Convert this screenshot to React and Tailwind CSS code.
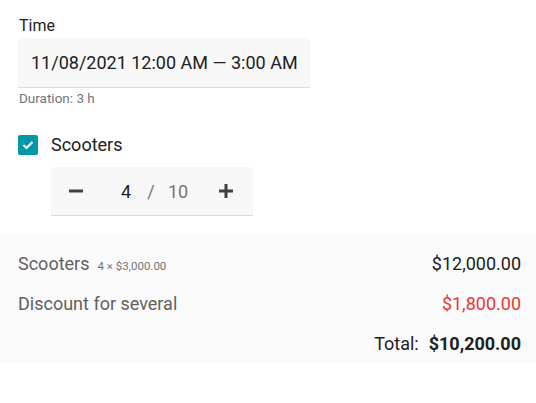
import React, { useState } from "react";

const MinusIcon = () => (
  <svg width="14" height="14" viewBox="0 0 14 14">
    <rect x="0" y="5.5" width="14" height="3" fill="#404040" />
  </svg>
);

const PlusIcon = () => (
  <svg width="14" height="14" viewBox="0 0 14 14">
    <rect x="0" y="5.5" width="14" height="3" fill="#404040" />
    <rect x="5.5" y="0" width="3" height="14" fill="#404040" />
  </svg>
);

const App = () => {
  const [count, setCount] = useState(4);
  const [checked, setChecked] = useState(true);

  return (
    <div className="w-[536px] h-[403px] bg-white font-['Roboto',sans-serif] text-[#212121]">
      <div className="px-[18px] pt-[15px]">
        <div className="text-[16px] leading-[21px] pl-[1px]">Time</div>
        <div className="mt-[2px] w-[292px] h-[50px] rounded-t-[4px] bg-[#f7f7f7] border-b border-[#dcdcdc] flex items-center pl-[13px] text-[18px] whitespace-nowrap">
          11/08/2021 12:00 AM — 3:00 AM
        </div>
        <div className="pl-[1px] pt-[1px] text-[13.5px] leading-[18px] text-[#757575]">Duration: 3 h</div>

        <label className="mt-[28px] flex items-center gap-[13px] cursor-pointer">
          <span
            onClick={() => setChecked(!checked)}
            className={`w-[20px] h-[20px] rounded-[2px] flex items-center justify-center ${checked ? "bg-[#0097a7]" : "border-2 border-[#757575]"}`}
          >
            {checked && (
              <svg width="12" height="10" viewBox="0 0 12 10">
                <path d="M1.5 5 L4.5 8 L10.5 2" stroke="white" strokeWidth="2.2" fill="none" />
              </svg>
            )}
          </span>
          <span className="text-[18px] leading-[20px]">Scooters</span>
        </label>

        <div className="mt-[12px] ml-[33px] w-[202px] h-[49px] pr-[2px] rounded-t-[4px] bg-[#f7f7f7] border-b border-[#dcdcdc] flex items-center">
          <button onClick={() => setCount(Math.max(0, count - 1))} className="w-[50px] flex justify-center">
            <MinusIcon />
          </button>
          <div className="flex-1 flex items-center pl-[15px] text-[18px]">
            <span className="w-[20px] text-center text-[#212121]">{count}</span>
            <span className="ml-[5px] w-[20px] text-center text-[#757575]">/</span>
            <span className="ml-[7px] w-[20px] text-center text-[#757575]">10</span>
          </div>
          <button onClick={() => setCount(Math.min(10, count + 1))} className="w-[50px] flex justify-center">
            <PlusIcon />
          </button>
        </div>
      </div>

      <div className="mt-[18px] bg-[#fafafa] pl-[18px] pr-[15px] pt-[9px]">
        <div className="flex items-center justify-between h-[40px]">
          <div className="flex items-baseline gap-[8px]">
            <span className="text-[18px] text-[#616161]">Scooters</span>
            <span className="text-[11.5px] text-[#757575]">4 × $3,000.00</span>
          </div>
          <span className="text-[18px]">$12,000.00</span>
        </div>
        <div className="flex items-center justify-between h-[40px]">
          <span className="text-[18px] text-[#616161]">Discount for several</span>
          <span className="text-[18px] text-[#e53935]">$1,800.00</span>
        </div>
        <div className="flex items-center justify-end h-[40px] gap-[10px] text-[18px]">
          <span>Total:</span>
          <span className="font-bold">$10,200.00</span>
        </div>
      </div>
    </div>
  );
};

export default App;
